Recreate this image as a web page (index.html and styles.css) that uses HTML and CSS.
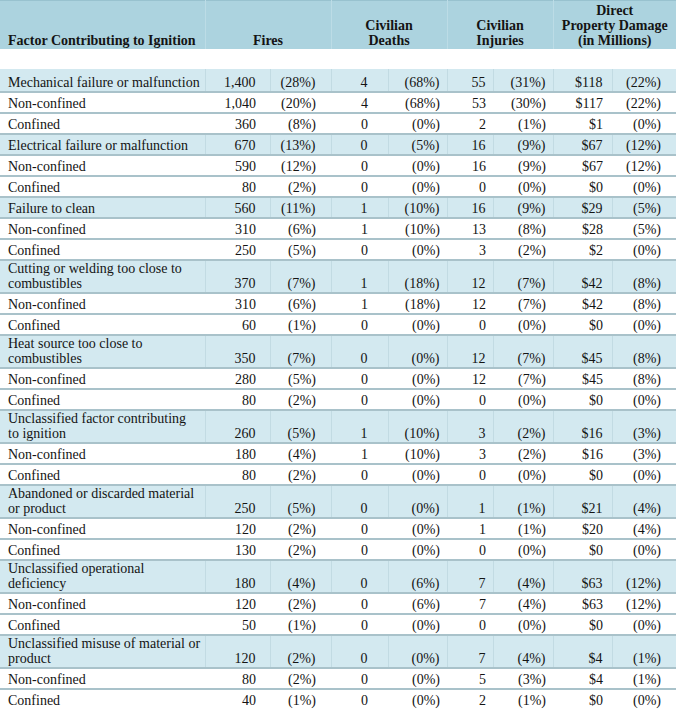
FILE: index.html
```html
<!DOCTYPE html>
<html>
<head>
<meta charset="utf-8">
<link rel="stylesheet" href="styles.css">
</head>
<body>
<table class="fire">
  <colgroup>
    <col class="c-factor"><col class="c-n1"><col class="c-p1"><col class="c-n2"><col class="c-p2"><col class="c-n3"><col class="c-p3"><col class="c-n4"><col class="c-p4">
  </colgroup>
  <thead>
    <tr class="head">
      <th class="factor">Factor Contributing to Ignition</th>
      <th colspan="2">Fires</th>
      <th colspan="2">Civilian<br>Deaths</th>
      <th colspan="2">Civilian<br>Injuries</th>
      <th colspan="2">Direct<br>Property Damage<br>(in Millions)</th>
    </tr>
  </thead>
  <tbody>
    <tr class="gap"><td colspan="9"></td></tr>
    <tr class="grp first"><td>Mechanical failure or malfunction</td><td>1,400</td><td>(28%)</td><td>4</td><td>(68%)</td><td>55</td><td>(31%)</td><td>$118</td><td>(22%)</td></tr>
    <tr><td>Non-confined</td><td>1,040</td><td>(20%)</td><td>4</td><td>(68%)</td><td>53</td><td>(30%)</td><td>$117</td><td>(22%)</td></tr>
    <tr><td>Confined</td><td>360</td><td>(8%)</td><td>0</td><td>(0%)</td><td>2</td><td>(1%)</td><td>$1</td><td>(0%)</td></tr>
    <tr class="grp"><td>Electrical failure or malfunction</td><td>670</td><td>(13%)</td><td>0</td><td>(5%)</td><td>16</td><td>(9%)</td><td>$67</td><td>(12%)</td></tr>
    <tr><td>Non-confined</td><td>590</td><td>(12%)</td><td>0</td><td>(0%)</td><td>16</td><td>(9%)</td><td>$67</td><td>(12%)</td></tr>
    <tr><td>Confined</td><td>80</td><td>(2%)</td><td>0</td><td>(0%)</td><td>0</td><td>(0%)</td><td>$0</td><td>(0%)</td></tr>
    <tr class="grp"><td>Failure to clean</td><td>560</td><td>(11%)</td><td>1</td><td>(10%)</td><td>16</td><td>(9%)</td><td>$29</td><td>(5%)</td></tr>
    <tr><td>Non-confined</td><td>310</td><td>(6%)</td><td>1</td><td>(10%)</td><td>13</td><td>(8%)</td><td>$28</td><td>(5%)</td></tr>
    <tr><td>Confined</td><td>250</td><td>(5%)</td><td>0</td><td>(0%)</td><td>3</td><td>(2%)</td><td>$2</td><td>(0%)</td></tr>
    <tr class="grp dbl"><td>Cutting or welding too close to<br>combustibles</td><td>370</td><td>(7%)</td><td>1</td><td>(18%)</td><td>12</td><td>(7%)</td><td>$42</td><td>(8%)</td></tr>
    <tr><td>Non-confined</td><td>310</td><td>(6%)</td><td>1</td><td>(18%)</td><td>12</td><td>(7%)</td><td>$42</td><td>(8%)</td></tr>
    <tr><td>Confined</td><td>60</td><td>(1%)</td><td>0</td><td>(0%)</td><td>0</td><td>(0%)</td><td>$0</td><td>(0%)</td></tr>
    <tr class="grp dbl"><td>Heat source too close to<br>combustibles</td><td>350</td><td>(7%)</td><td>0</td><td>(0%)</td><td>12</td><td>(7%)</td><td>$45</td><td>(8%)</td></tr>
    <tr><td>Non-confined</td><td>280</td><td>(5%)</td><td>0</td><td>(0%)</td><td>12</td><td>(7%)</td><td>$45</td><td>(8%)</td></tr>
    <tr><td>Confined</td><td>80</td><td>(2%)</td><td>0</td><td>(0%)</td><td>0</td><td>(0%)</td><td>$0</td><td>(0%)</td></tr>
    <tr class="grp dbl"><td>Unclassified factor contributing<br>to ignition</td><td>260</td><td>(5%)</td><td>1</td><td>(10%)</td><td>3</td><td>(2%)</td><td>$16</td><td>(3%)</td></tr>
    <tr><td>Non-confined</td><td>180</td><td>(4%)</td><td>1</td><td>(10%)</td><td>3</td><td>(2%)</td><td>$16</td><td>(3%)</td></tr>
    <tr><td>Confined</td><td>80</td><td>(2%)</td><td>0</td><td>(0%)</td><td>0</td><td>(0%)</td><td>$0</td><td>(0%)</td></tr>
    <tr class="grp dbl"><td>Abandoned or discarded material<br>or product</td><td>250</td><td>(5%)</td><td>0</td><td>(0%)</td><td>1</td><td>(1%)</td><td>$21</td><td>(4%)</td></tr>
    <tr><td>Non-confined</td><td>120</td><td>(2%)</td><td>0</td><td>(0%)</td><td>1</td><td>(1%)</td><td>$20</td><td>(4%)</td></tr>
    <tr><td>Confined</td><td>130</td><td>(2%)</td><td>0</td><td>(0%)</td><td>0</td><td>(0%)</td><td>$0</td><td>(0%)</td></tr>
    <tr class="grp dbl"><td>Unclassified operational<br>deficiency</td><td>180</td><td>(4%)</td><td>0</td><td>(6%)</td><td>7</td><td>(4%)</td><td>$63</td><td>(12%)</td></tr>
    <tr><td>Non-confined</td><td>120</td><td>(2%)</td><td>0</td><td>(6%)</td><td>7</td><td>(4%)</td><td>$63</td><td>(12%)</td></tr>
    <tr><td>Confined</td><td>50</td><td>(1%)</td><td>0</td><td>(0%)</td><td>0</td><td>(0%)</td><td>$0</td><td>(0%)</td></tr>
    <tr class="grp dbl"><td>Unclassified misuse of material or<br>product</td><td>120</td><td>(2%)</td><td>0</td><td>(0%)</td><td>7</td><td>(4%)</td><td>$4</td><td>(1%)</td></tr>
    <tr><td>Non-confined</td><td>80</td><td>(2%)</td><td>0</td><td>(0%)</td><td>5</td><td>(3%)</td><td>$4</td><td>(1%)</td></tr>
    <tr><td>Confined</td><td>40</td><td>(1%)</td><td>0</td><td>(0%)</td><td>2</td><td>(1%)</td><td>$0</td><td>(0%)</td></tr>
  </tbody>
</table>
</body>
</html>
```
FILE: styles.css
```css
html, body {
  margin: 0;
  padding: 0;
  background: #ffffff;
}
body {
  font-family: "Liberation Serif", "Times New Roman", serif;
  font-size: 14px;
  color: #141414;
}
.fire {
  border-collapse: collapse;
  table-layout: fixed;
  width: 676px;
}
.c-factor { width: 205px; }
.c-n1 { width: 65px; }
.c-p1 { width: 61px; }
.c-n2 { width: 57px; }
.c-p2 { width: 59px; }
.c-n3 { width: 46px; }
.c-p3 { width: 60px; }
.c-n4 { width: 59px; }
.c-p4 { width: 64px; }

.fire th,
.fire td {
  padding: 0;
  line-height: 15px;
  vertical-align: bottom;
  white-space: nowrap;
}
.head th {
  background: #acd3df;
  height: 47px;
  font-weight: bold;
  text-align: center;
  border-top: 1px solid #98c2cf;
  border-right: 1px solid #bcdce6;
  padding-bottom: 1px;
}
.head th:last-child { border-right: none; }
.head th.factor {
  text-align: left;
  padding-left: 8px;
}
.fire .gap td {
  height: 19px;
  border: none;
}
.fire tbody td {
  height: 18px;
  padding-bottom: 1px;
  border-bottom: 2px solid #a9c2ca;
  text-align: right;
}
.fire tbody td:first-child {
  text-align: left;
  padding-left: 8px;
}
.fire tbody td:nth-child(2) { padding-right: 14px; }
.fire tbody td:nth-child(3) { padding-right: 15px; }
.fire tbody td:nth-child(4) { padding-right: 20px; }
.fire tbody td:nth-child(5) { padding-right: 7px; }
.fire tbody td:nth-child(6) { padding-right: 7px; }
.fire tbody td:nth-child(7) { padding-right: 7px; }
.fire tbody td:nth-child(8) { padding-right: 9px; }
.fire tbody td:nth-child(9) { padding-right: 15px; }

.fire tr.grp td {
  background: #d3e9f0;
  border-right: 1px solid #c2dbe3;
}
.fire tr.grp td:last-child { border-right: none; }
.fire tr.first td { height: 21px; }
.fire tr.dbl td { height: 30px; }
```
